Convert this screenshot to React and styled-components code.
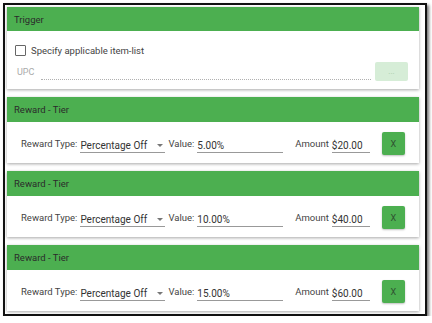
import React from 'react';
import styled, { createGlobalStyle } from 'styled-components';

const GlobalStyle = createGlobalStyle`
    body {
        margin: 0;
        background: #ffffff;
        font-family: Roboto, "Liberation Sans", sans-serif;
    }
`
const Frame = styled.div`
    margin: 3px 0 0 3px;
    width: 416px;
    height: 305px;
    border: 2px solid #111;
    padding: 2px;
    box-sizing: content-box;
    background: #fff;
    box-shadow: 2px 2px 3px rgba(0,0,0,0.55);
    display: flex;
    flex-direction: column;
    gap: 8px;
    overflow: hidden;
`
const Card = styled.div`
    width: 412px;
    flex-shrink: 0;
    background: #fff;
    box-shadow: 0 1px 3px rgba(0,0,0,0.35);
`
const Header = styled.div`
    height: ${p => p.h || 25}px;
    background: #4caf50;
    color: #2b2b2b;
    font-size: 9.5px;
    display: flex;
    align-items: center;
    padding-left: 7px;
`
const TriggerBody = styled.div`
    height: 58px;
    padding: 13px 11px 0 8px;
    box-sizing: border-box;
`
const CheckRow = styled.label`
    display: flex;
    align-items: center;
    font-size: 9.5px;
    color: #444;
    height: 12px;
`
const Box = styled.span`
    width: 9px;
    height: 9px;
    border: 1px solid #666;
    border-radius: 1px;
    margin-right: 5px;
`
const UpcRow = styled.div`
    display: flex;
    align-items: flex-end;
    margin-top: 6px;
    height: 19px;
`
const UpcLabel = styled.span`
    font-size: 9px;
    color: #aaa;
    margin-left: 2px;
    width: 24px;
    padding-bottom: 4px;
`
const Dotted = styled.div`
    flex: 1;
    border-bottom: 1px dotted #b0b0b0;
    margin-bottom: 1px;
`
const GhostButton = styled.div`
    width: 33px;
    height: 19px;
    margin-left: 4px;
    background: #d6edd7;
    border-radius: 2px;
    color: #a6cca8;
    font-size: 8px;
    display: flex;
    align-items: center;
    justify-content: center;
`
const TierBody = styled.div`
    height: 41px;
    padding: 10px 0 0 14px;
    box-sizing: border-box;
`
const Row = styled.div`
    display: flex;
    align-items: center;
    height: 23px;
    font-size: 9.5px;
    color: #444;
    white-space: nowrap;
`
const Label = styled.span`
    flex-shrink: 0;
    margin-left: ${p => p.gap || 0}px;
    margin-right: 3px;
    margin-bottom: 1px;
`
const Field = styled.div`
    flex-shrink: 0;
    width: ${p => p.w}px;
    height: 18px;
    border-bottom: 1px solid #999;
    display: flex;
    align-items: center;
    justify-content: space-between;
    color: #333;
    font-size: 10px;
    padding-top: 4px;
    box-sizing: border-box;
`
const Caret = styled.span`
    width: 0;
    height: 0;
    border-left: 3px solid transparent;
    border-right: 3px solid transparent;
    border-top: 3px solid #777;
    margin-right: 2px;
`
const XButton = styled.button`
    flex-shrink: 0;
    width: 23px;
    height: 23px;
    margin-left: 12px;
    border: none;
    border-radius: 2px;
    background: #4caf50;
    color: #2f4f30;
    font-family: Roboto, "Liberation Sans", sans-serif;
    font-size: 9px;
    padding: 0;
    box-shadow: 0 1px 2px rgba(0,0,0,0.25);
`

const tiers = [
    { value: '5.00%', amount: '$20.00' },
    { value: '10.00%', amount: '$40.00' },
    { value: '15.00%', amount: '$60.00' },
]

const App = () => {
    return (
        <>
            <GlobalStyle />
            <Frame>
                <Card>
                    <Header h={24}>Trigger</Header>
                    <TriggerBody>
                        <CheckRow><Box />Specify applicable item-list</CheckRow>
                        <UpcRow>
                            <UpcLabel>UPC</UpcLabel>
                            <Dotted />
                            <GhostButton>...</GhostButton>
                        </UpcRow>
                    </TriggerBody>
                </Card>
                {tiers.map((t, i) => (
                    <Card key={i}>
                        <Header>Reward - Tier</Header>
                        <TierBody>
                            <Row>
                                <Label>Reward Type:</Label>
                                <Field w={85}>Percentage Off<Caret /></Field>
                                <Label gap={3}>Value:</Label>
                                <Field w={86}>{t.value}</Field>
                                <Label gap={12}>Amount</Label>
                                <Field w={38}>{t.amount}</Field>
                                <XButton>X</XButton>
                            </Row>
                        </TierBody>
                    </Card>
                ))}
            </Frame>
        </>
    )
}

export default App
